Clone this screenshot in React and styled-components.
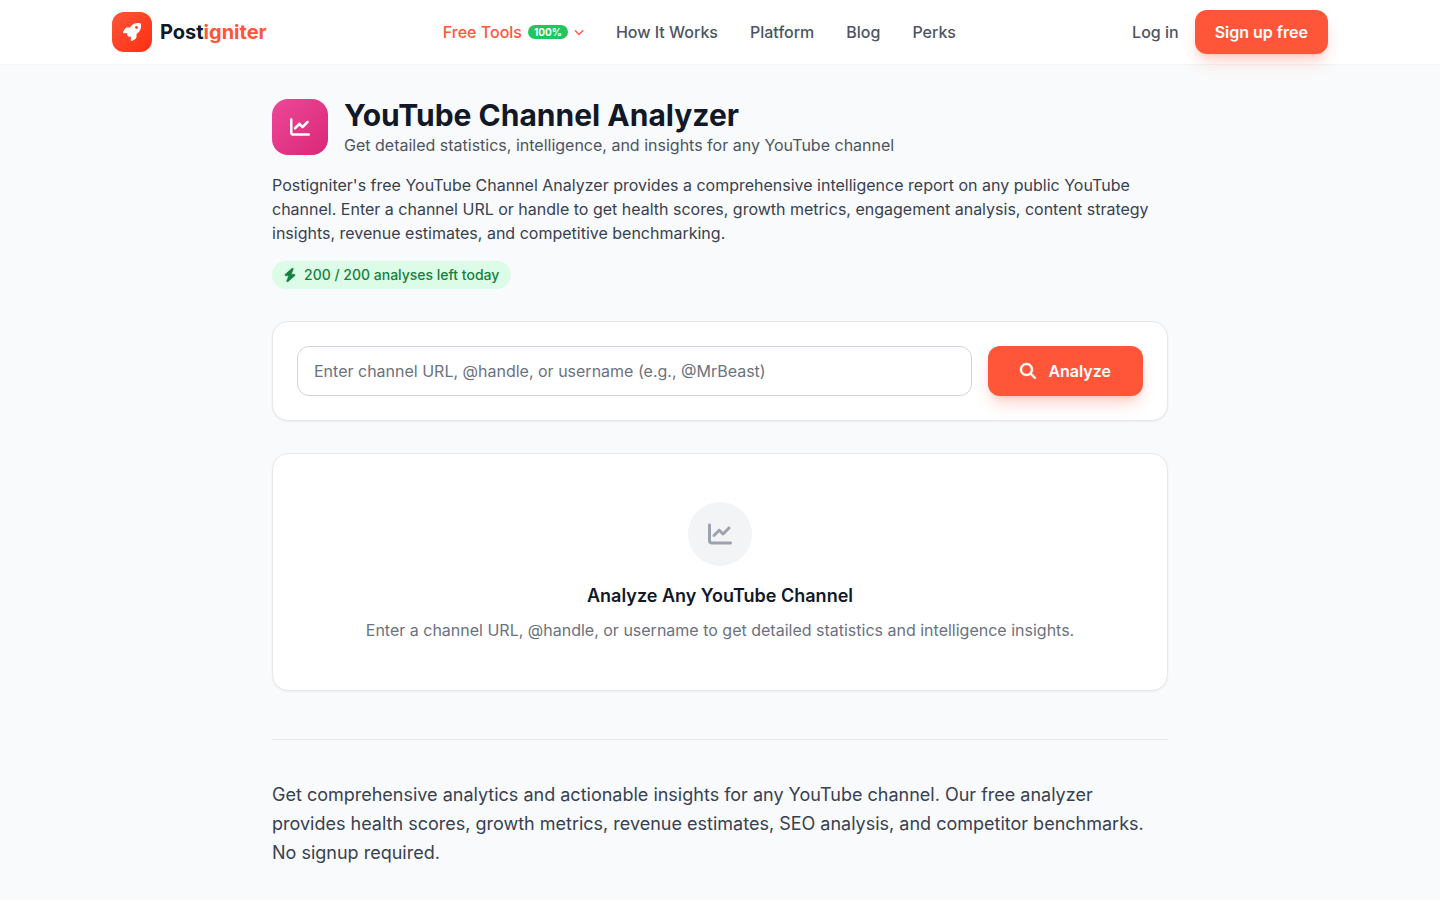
import React from 'react';
import styled, { createGlobalStyle } from 'styled-components';
import { FaRocket, FaChartLine, FaBolt, FaMagnifyingGlass, FaChevronDown } from 'react-icons/fa6';

const GlobalStyle = createGlobalStyle`
  *, *::before, *::after { box-sizing: border-box; }
  body {
    margin: 0;
    background: #f9fafb;
    color: #111827;
    font-family: Inter, "Liberation Sans", sans-serif;
    font-size: 16px;
    line-height: 24px;
  }
  h1, h2, p { margin: 0; }
  button, input { font: inherit; }
  svg { display: block; flex-shrink: 0; }
`;

const Header = styled.header`
  background: #fff;
  border-bottom: 1px solid #f3f4f6;
`;

const HeaderInner = styled.div`
  max-width: 1280px;
  height: 64px;
  margin: 0 auto;
  padding: 0 32px;
  display: flex;
  align-items: center;
  justify-content: space-between;
`;

const Logo = styled.a`
  display: flex;
  align-items: center;
  gap: 8px;
  color: #111827;
  font-size: 20px;
  line-height: 28px;
  font-weight: 700;
  text-decoration: none;
`;

const LogoMark = styled.span`
  display: flex;
  align-items: center;
  justify-content: center;
  width: 40px;
  height: 40px;
  border-radius: 12px;
  background: linear-gradient(135deg, #ff5538, #ff2e12);
  color: #fff;
  font-size: 18px;
`;

const Accent = styled.span`
  color: #ff5538;
`;

const Nav = styled.nav`
  display: flex;
  align-items: center;
  gap: 32px;
`;

const NavLink = styled.a`
  color: #4b5563;
  font-weight: 500;
  text-decoration: none;
`;

const NavMenu = styled.button`
  display: flex;
  align-items: center;
  gap: 6px;
  padding: 0;
  border: 0;
  background: none;
  color: #ff5538;
  font-weight: 500;
  cursor: pointer;
`;

const Badge = styled.span`
  padding: 2px 6px;
  border-radius: 999px;
  background: #22c55e;
  color: #fff;
  font-size: 10px;
  line-height: 10px;
  font-weight: 700;
`;

const Account = styled.div`
  display: flex;
  align-items: center;
  gap: 16px;
`;

const Button = styled.button`
  display: flex;
  align-items: center;
  gap: 12px;
  padding: ${({ $large }) => ($large ? '13px 32px' : '10px 20px')};
  border: 0;
  border-radius: 12px;
  background: #ff5538;
  color: #fff;
  font-weight: 600;
  white-space: nowrap;
  box-shadow: 0 10px 15px -3px rgba(255, 85, 56, 0.25), 0 4px 6px -4px rgba(255, 85, 56, 0.25);
  cursor: pointer;
`;

const Main = styled.main`
  max-width: 960px;
  margin: 0 auto;
  padding: 32px;
`;

const TitleRow = styled.div`
  display: flex;
  align-items: center;
  gap: 16px;
  margin-bottom: 16px;
`;

const TitleIcon = styled.span`
  display: flex;
  align-items: center;
  justify-content: center;
  width: 56px;
  height: 56px;
  border-radius: 16px;
  background: linear-gradient(135deg, #ec4899, #db2777);
  color: #fff;
  font-size: 20px;
`;

const Title = styled.h1`
  font-size: 30px;
  line-height: 36px;
  font-weight: 700;
`;

const Subtitle = styled.p`
  color: #4b5563;
`;

const Intro = styled.p`
  color: #374151;
  margin-bottom: 16px;
`;

const Quota = styled.div`
  display: flex;
  align-items: center;
  gap: 8px;
  width: fit-content;
  padding: 4px 12px;
  border-radius: 999px;
  background: #dcfce7;
  color: #15803d;
  font-size: 14px;
  line-height: 20px;
  font-weight: 500;
`;

const QuotaIcon = styled(FaBolt)`
  width: 12px;
  height: 14px;
  stroke: currentColor;
  stroke-width: 16px;
  overflow: visible;
`;

const Card = styled.section`
  margin-top: 32px;
  padding: ${({ $roomy }) => ($roomy ? '48px' : '24px')};
  border: 1px solid #e5e7eb;
  border-radius: 16px;
  background: #fff;
  box-shadow: 0 1px 2px rgba(0, 0, 0, 0.05);
`;

const SearchForm = styled.form`
  display: flex;
  gap: 16px;
`;

const ChannelInput = styled.input`
  flex: 1;
  min-width: 0;
  padding: 12px 16px;
  border: 1px solid #d1d5db;
  border-radius: 12px;
  background: #fff;
  color: #111827;
  &::placeholder { color: #6b7280; opacity: 1; }
`;

const SearchIcon = styled(FaMagnifyingGlass)`
  stroke: currentColor;
  stroke-width: 12px;
  overflow: visible;
`;

const Empty = styled.div`
  display: flex;
  flex-direction: column;
  align-items: center;
  text-align: center;
`;

const EmptyIcon = styled.span`
  display: flex;
  align-items: center;
  justify-content: center;
  width: 64px;
  height: 64px;
  margin-bottom: 16px;
  border-radius: 50%;
  background: #f3f4f6;
  color: #9ca3af;
  font-size: 24px;
`;

const EmptyTitle = styled.h2`
  margin-bottom: 8px;
  font-size: 18px;
  line-height: 28px;
  font-weight: 600;
`;

const EmptyText = styled.p`
  color: #6b7280;
`;

const About = styled.section`
  margin-top: 48px;
  padding-top: 40px;
  border-top: 1px solid #e5e7eb;
  color: #374151;
  font-size: 18px;
  line-height: 29px;
`;

export default function App() {
  return (
    <>
      <GlobalStyle />
      <Header>
        <HeaderInner>
          <Logo href="#">
            <LogoMark><FaRocket /></LogoMark>
            <span>Post<Accent>igniter</Accent></span>
          </Logo>
          <Nav>
            <NavMenu type="button">
              Free Tools
              <Badge>100%</Badge>
              <FaChevronDown size={10} />
            </NavMenu>
            <NavLink href="#">How It Works</NavLink>
            <NavLink href="#">Platform</NavLink>
            <NavLink href="#">Blog</NavLink>
            <NavLink href="#">Perks</NavLink>
          </Nav>
          <Account>
            <NavLink href="#">Log in</NavLink>
            <Button type="button">Sign up free</Button>
          </Account>
        </HeaderInner>
      </Header>
      <Main>
        <TitleRow>
          <TitleIcon><FaChartLine /></TitleIcon>
          <div>
            <Title>YouTube Channel Analyzer</Title>
            <Subtitle>Get detailed statistics, intelligence, and insights for any YouTube channel</Subtitle>
          </div>
        </TitleRow>
        <Intro>
          Postigniter's free YouTube Channel Analyzer provides a comprehensive intelligence report on any
          public YouTube channel. Enter a channel URL or handle to get health scores, growth metrics,
          engagement analysis, content strategy insights, revenue estimates, and competitive benchmarking.
        </Intro>
        <Quota><QuotaIcon />200 / 200 analyses left today</Quota>
        <Card>
          <SearchForm onSubmit={(event) => event.preventDefault()}>
            <ChannelInput
              type="text"
              aria-label="YouTube channel"
              placeholder="Enter channel URL, @handle, or username (e.g., @MrBeast)"
            />
            <Button type="submit" $large><SearchIcon />Analyze</Button>
          </SearchForm>
        </Card>
        <Card $roomy>
          <Empty>
            <EmptyIcon><FaChartLine /></EmptyIcon>
            <EmptyTitle>Analyze Any YouTube Channel</EmptyTitle>
            <EmptyText>
              Enter a channel URL, @handle, or username to get detailed statistics and intelligence insights.
            </EmptyText>
          </Empty>
        </Card>
        <About>
          <p>
            Get comprehensive analytics and actionable insights for any YouTube channel. Our free analyzer
            provides health scores, growth metrics, revenue estimates, SEO analysis, and competitor
            benchmarks. No signup required.
          </p>
        </About>
      </Main>
    </>
  );
}
